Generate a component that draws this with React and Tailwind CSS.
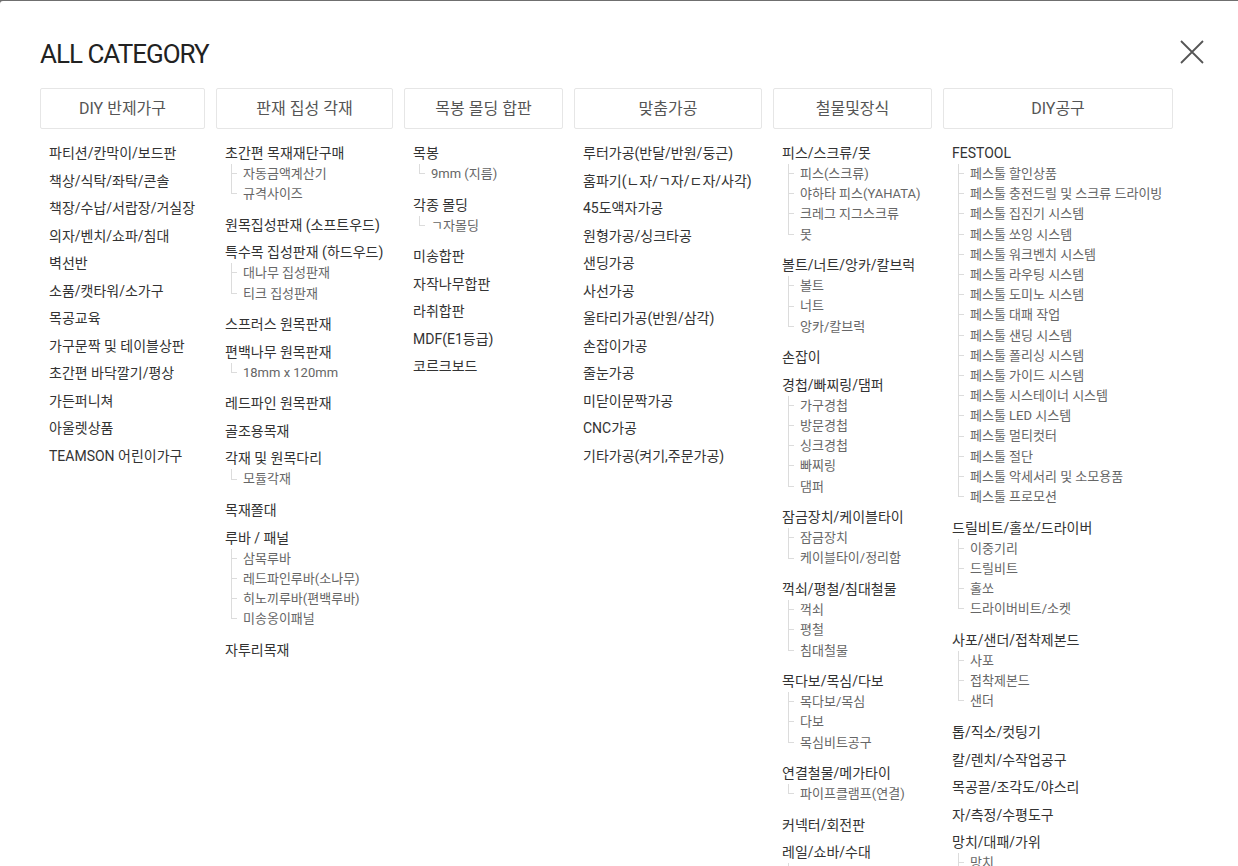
const columns = [
  {
    title: 'DIY 반제가구',
    width: 'w-[165px]',
    items: [
      { name: '파티션/칸막이/보드판' },
      { name: '책상/식탁/좌탁/콘솔' },
      { name: '책장/수납/서랍장/거실장' },
      { name: '의자/벤치/쇼파/침대' },
      { name: '벽선반' },
      { name: '소품/캣타워/소가구' },
      { name: '목공교육' },
      { name: '가구문짝 및 테이블상판' },
      { name: '초간편 바닥깔기/평상' },
      { name: '가든퍼니쳐' },
      { name: '아울렛상품' },
      { name: 'TEAMSON 어린이가구' },
    ],
  },
  {
    title: '판재 집성 각재',
    width: 'w-[177px]',
    items: [
      { name: '초간편 목재재단구매', subs: ['자동금액계산기', '규격사이즈'] },
      { name: '원목집성판재 (소프트우드)' },
      { name: '특수목 집성판재 (하드우드)', subs: ['대나무 집성판재', '티크 집성판재'] },
      { name: '스프러스 원목판재' },
      { name: '편백나무 원목판재', subs: ['18mm x 120mm'] },
      { name: '레드파인 원목판재' },
      { name: '골조용목재' },
      { name: '각재 및 원목다리', subs: ['모듈각재'] },
      { name: '목재쫄대' },
      { name: '루바 / 패널', subs: ['삼목루바', '레드파인루바(소나무)', '히노끼루바(편백루바)', '미송옹이패널'] },
      { name: '자투리목재' },
    ],
  },
  {
    title: '목봉 몰딩 합판',
    width: 'w-[159px]',
    items: [
      { name: '목봉', subs: ['9mm (지름)'] },
      { name: '각종 몰딩', subs: ['ㄱ자몰딩'] },
      { name: '미송합판' },
      { name: '자작나무합판' },
      { name: '라취합판' },
      { name: 'MDF(E1등급)' },
      { name: '코르크보드' },
    ],
  },
  {
    title: '맞춤가공',
    width: 'w-[188px]',
    items: [
      { name: '루터가공(반달/반원/둥근)' },
      { name: '홈파기(ㄴ자/ㄱ자/ㄷ자/사각)' },
      { name: '45도액자가공' },
      { name: '원형가공/싱크타공' },
      { name: '샌딩가공' },
      { name: '사선가공' },
      { name: '울타리가공(반원/삼각)' },
      { name: '손잡이가공' },
      { name: '줄눈가공' },
      { name: '미닫이문짝가공' },
      { name: 'CNC가공' },
      { name: '기타가공(켜기,주문가공)' },
    ],
  },
  {
    title: '철물및장식',
    width: 'w-[159px]',
    items: [
      { name: '피스/스크류/못', subs: ['피스(스크류)', '야하타 피스(YAHATA)', '크레그 지그스크류', '못'] },
      { name: '볼트/너트/앙카/칼브럭', subs: ['볼트', '너트', '앙카/칼브럭'] },
      { name: '손잡이' },
      { name: '경첩/빠찌링/댐퍼', subs: ['가구경첩', '방문경첩', '싱크경첩', '빠찌링', '댐퍼'] },
      { name: '잠금장치/케이블타이', subs: ['잠금장치', '케이블타이/정리함'] },
      { name: '꺽쇠/평철/침대철물', subs: ['꺽쇠', '평철', '침대철물'] },
      { name: '목다보/목심/다보', subs: ['목다보/목심', '다보', '목심비트공구'] },
      { name: '연결철물/메가타이', subs: ['파이프클램프(연결)'] },
      { name: '커넥터/회전판' },
      { name: '레일/쇼바/수대', subs: ['레일'] },
    ],
  },
  {
    title: 'DIY공구',
    width: 'w-[230px]',
    items: [
      {
        name: 'FESTOOL',
        subs: [
          '페스툴 할인상품',
          '페스툴 충전드릴 및 스크류 드라이빙',
          '페스툴 집진기 시스템',
          '페스툴 쏘잉 시스템',
          '페스툴 워크벤치 시스템',
          '페스툴 라우팅 시스템',
          '페스툴 도미노 시스템',
          '페스툴 대패 작업',
          '페스툴 샌딩 시스템',
          '페스툴 폴리싱 시스템',
          '페스툴 가이드 시스템',
          '페스툴 시스테이너 시스템',
          '페스툴 LED 시스템',
          '페스툴 멀티컷터',
          '페스툴 절단',
          '페스툴 악세서리 및 소모용품',
          '페스툴 프로모션',
        ],
      },
      { name: '드릴비트/홀쏘/드라이버', subs: ['이중기리', '드릴비트', '홀쏘', '드라이버비트/소켓'] },
      { name: '사포/샌더/접착제본드', subs: ['사포', '접착제본드', '샌더'] },
      { name: '톱/직소/컷팅기' },
      { name: '칼/렌치/수작업공구' },
      { name: '목공끌/조각도/야스리' },
      { name: '자/측정/수평도구' },
      { name: '망치/대패/가위', subs: ['망치', '대패'] },
    ],
  },
];

const SubList = ({ subs }) => (
  <ul className="pb-[4px]">
    {subs.map((s, i) => {
      const last = i === subs.length - 1;
      return (
        <li key={s} className="flex h-[20.2px] items-stretch">
          <div className="ml-[6px] flex w-[6px] flex-col">
            <div className="h-1/2 border-b border-l border-[#dcdcdc]" />
            <div className={last ? 'h-1/2' : 'h-1/2 border-l border-[#dcdcdc]'} />
          </div>
          <span className="ml-[6px] whitespace-nowrap text-[13px] leading-[20.2px] text-[#666]">{s}</span>
        </li>
      );
    })}
  </ul>
);

export default function App() {
  return (
    <div className="h-[866px] overflow-hidden bg-[#6f6f6f] pt-[1px]" style={{ fontFamily: 'Roboto, "Noto Sans CJK KR", sans-serif' }}>
      <div className="h-full rounded-tl-[3px] bg-white px-[40px]">
        <div className="flex items-center justify-between pt-[36px]">
          <h1 className="text-[26px] leading-[34px] tracking-[-1px] text-[#222]">ALL CATEGORY</h1>
          <button className="mr-[-6px] mt-[-4px] text-[#555]">
            <svg width="24" height="24" viewBox="0 0 24 24" fill="none" stroke="currentColor" strokeWidth="1.8">
              <path d="M1 1L23 23M23 1L1 23" />
            </svg>
          </button>
        </div>

        <div className="mt-[17px] flex gap-[11px]">
          {columns.map((col) => (
            <div key={col.title} className={`${col.width} shrink-0`}>
              <div className="flex h-[41px] items-center justify-center rounded-[2px] border border-[#e6e6e6] text-[16px] text-[#555]">
                {col.title}
              </div>
              <ul className="mt-[14px] pl-[9px]">
                {col.items.map((it) => (
                  <li key={it.name} className="mb-[6.5px]">
                    <div className="whitespace-nowrap text-[14px] leading-[21px] text-[#333]">{it.name}</div>
                    {it.subs && <SubList subs={it.subs} />}
                  </li>
                ))}
              </ul>
            </div>
          ))}
        </div>
      </div>
    </div>
  );
}
